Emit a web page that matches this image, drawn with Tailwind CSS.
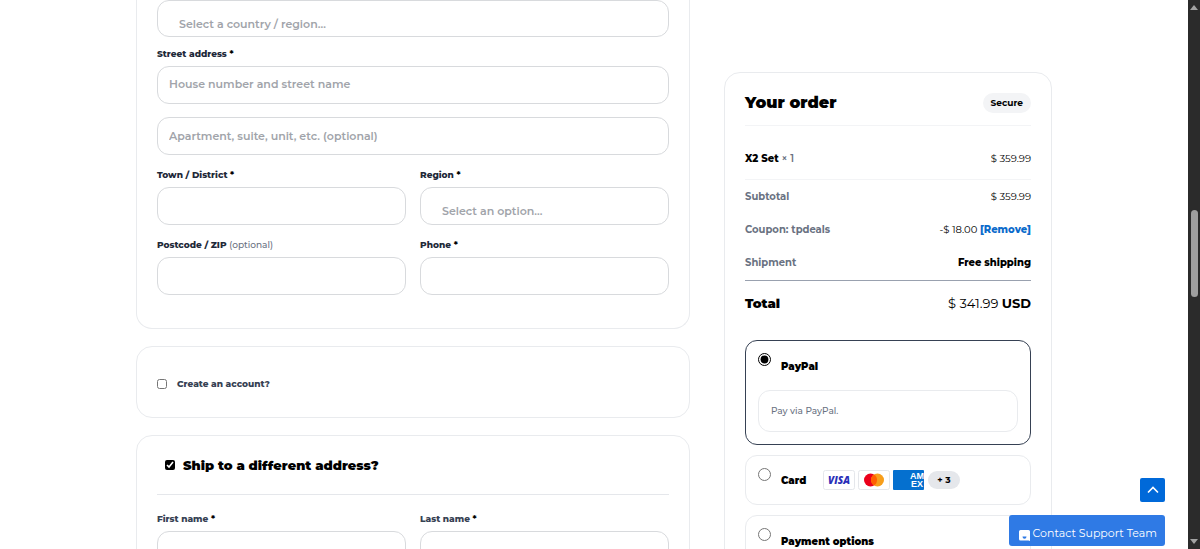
<!DOCTYPE html>
<html lang="en">
<head>
    <meta charset="UTF-8">
    <meta name="viewport" content="width=device-width, initial-scale=1.0">
    <title>Checkout</title>
    <script src="https://cdn.jsdelivr.net/npm/@tailwindcss/browser@4"></script>
</head>
<body class="flex h-screen overflow-hidden bg-white font-['Montserrat',Inter,sans-serif] text-black">
    <!-- Checkout -->
    <main class="min-w-0 flex-1 overflow-hidden">
        <form class="mx-auto grid max-w-[916px] grid-cols-[1fr_328px] items-start gap-[34px]">
            <div class="flex flex-col gap-[17px]">
                <!-- Billing details -->
                <section class="rounded-b-2xl border border-t-0 border-[#e9ebee] px-5 pb-[33px] text-[9px] leading-4 text-gray-800">
                    <select aria-label="Country / Region" class="block h-[37px] w-full appearance-none rounded-xl border border-[#d8dadd] pt-[10px] pl-[21px] text-[11px] font-semibold text-[#a1a4aa]">
                        <option>Select a country / region…</option>
                    </select>
                    <label for="street" class="mt-[9px] block font-extrabold">Street address <span class="text-black">*</span></label>
                    <input id="street" type="text" placeholder="House number and street name" class="mt-1 block h-[38px] w-full rounded-xl border border-[#d8dadd] px-[11px] pb-[2px] text-[11px] font-semibold placeholder:text-[#a1a4aa]">
                    <input type="text" aria-label="Apartment" placeholder="Apartment, suite, unit, etc. (optional)" class="mt-[13px] block h-[38px] w-full rounded-xl border border-[#d8dadd] px-[11px] text-[11px] font-semibold placeholder:text-[#a1a4aa]">
                    <div class="mt-3 grid grid-cols-2 gap-x-[14px] gap-y-3">
                        <div>
                            <label for="town" class="block font-extrabold">Town / District <span class="text-black">*</span></label>
                            <input id="town" type="text" class="mt-1 block h-[38px] w-full rounded-xl border border-[#d8dadd] px-[11px] text-[11px]">
                        </div>
                        <div>
                            <label for="region" class="block font-extrabold">Region <span class="text-black">*</span></label>
                            <select id="region" class="mt-1 block h-[38px] w-full appearance-none rounded-xl border border-[#d8dadd] pt-[10px] pl-[21px] text-[11px] font-semibold text-[#a1a4aa]">
                                <option>Select an option…</option>
                            </select>
                        </div>
                        <div>
                            <label for="postcode" class="block font-extrabold">Postcode / ZIP <span class="font-medium text-gray-500">(optional)</span></label>
                            <input id="postcode" type="text" class="mt-1 block h-[38px] w-full rounded-xl border border-[#d8dadd] px-[11px] text-[11px]">
                        </div>
                        <div>
                            <label for="phone" class="block font-extrabold">Phone <span class="text-black">*</span></label>
                            <input id="phone" type="tel" class="mt-1 block h-[38px] w-full rounded-xl border border-[#d8dadd] px-[11px] text-[11px]">
                        </div>
                    </div>
                </section>

                <!-- Account -->
                <section class="rounded-2xl border border-[#e9ebee] px-5 pt-[29px] pb-[25px]">
                    <label class="flex items-center gap-[10px] text-[9px] leading-4 font-extrabold text-gray-700">
                        <input type="checkbox" class="size-[10px]">
                        Create an account?
                    </label>
                </section>

                <!-- Shipping details -->
                <section class="rounded-2xl border border-[#e9ebee] px-5 pb-8 text-[9px] leading-4 text-gray-700">
                    <h3 class="border-b border-gray-200 px-2 pt-[19px] pb-[19px] text-black">
                        <label class="flex items-center gap-2 text-[13px] leading-5 font-black">
                            <input type="checkbox" checked class="size-[10px] accent-black">
                            Ship to a different address?
                        </label>
                    </h3>
                    <div class="mt-4 grid grid-cols-2 gap-x-[14px]">
                        <div>
                            <label for="first" class="block font-extrabold">First name <span class="text-black">*</span></label>
                            <input id="first" type="text" class="mt-1 block h-[38px] w-full rounded-xl border border-[#d8dadd] px-[11px] text-[11px]">
                        </div>
                        <div>
                            <label for="last" class="block font-extrabold">Last name <span class="text-black">*</span></label>
                            <input id="last" type="text" class="mt-1 block h-[38px] w-full rounded-xl border border-[#d8dadd] px-[11px] text-[11px]">
                        </div>
                    </div>
                </section>
            </div>

            <!-- Order summary -->
            <aside class="mt-[72px] rounded-2xl border border-[#e9ebee] px-5 pt-5 pb-8">
                <div class="flex items-center justify-between border-b border-gray-100 pb-3">
                    <h2 class="text-base leading-5 font-black">Your order</h2>
                    <span class="rounded-full bg-gray-100 px-2 text-[9px] leading-5 font-bold">Secure</span>
                </div>

                <table class="mt-3 w-full text-[10px]">
                    <tbody>
                        <tr class="h-[41px] border-b border-gray-100">
                            <td class="font-extrabold">X2 Set <span class="font-semibold text-gray-500">× 1</span></td>
                            <td class="text-right">$ 359.99</td>
                        </tr>
                        <tr class="h-[34px]">
                            <th scope="row" class="text-left font-bold text-gray-500">Subtotal</th>
                            <td class="text-right">$ 359.99</td>
                        </tr>
                        <tr class="h-[33px]">
                            <th scope="row" class="text-left font-bold text-gray-500">Coupon: tpdeals</th>
                            <td class="text-right">-$ 18.00 <a href="#" class="font-extrabold text-[#0b6bcb]">[Remove]</a></td>
                        </tr>
                        <tr class="h-[34px] border-b border-gray-400">
                            <th scope="row" class="text-left font-bold text-gray-500">Shipment</th>
                            <td class="text-right font-extrabold">Free shipping</td>
                        </tr>
                        <tr class="h-[46px] text-[13px]">
                            <th scope="row" class="text-left font-black">Total</th>
                            <td class="text-right">$ 341.99 <span class="font-bold">USD</span></td>
                        </tr>
                    </tbody>
                </table>

                <!-- Payment methods -->
                <div class="mt-[14px] flex flex-col gap-[10px] text-[10px] font-black">
                    <div class="rounded-xl border border-gray-700 p-3">
                        <label class="flex h-6 items-start gap-[10px]">
                            <input type="radio" name="payment" checked class="size-[13px] accent-black">
                            <span class="flex h-[26px] items-center">PayPal</span>
                        </label>
                        <p class="mt-[13px] rounded-xl border border-[#e9ebee] px-3 py-3 text-[9px] leading-4 font-medium text-gray-500">Pay via PayPal.</p>
                    </div>
                    <div class="rounded-xl border border-[#e9ebee] p-3">
                        <label class="flex h-6 items-start gap-[10px]">
                            <input type="radio" name="payment" class="size-[13px]">
                            <span class="flex h-6 items-center">Card</span>
                            <span class="ml-[7px] flex h-6 items-center gap-[3px]">
                                <svg class="h-5 w-8" viewBox="0 0 32 20" role="img" aria-label="Visa">
                                    <rect x=".5" y=".5" width="31" height="19" rx="2" fill="#fff" stroke="#e5e7eb"/>
                                    <text x="16" y="14" text-anchor="middle" font-family="Open Sans" font-size="10" font-weight="800" font-style="italic" fill="#2a2fb8">VISA</text>
                                </svg>
                                <svg class="h-5 w-8" viewBox="0 0 32 20" role="img" aria-label="Mastercard">
                                    <rect x=".5" y=".5" width="31" height="19" rx="2" fill="#fff" stroke="#e5e7eb"/>
                                    <circle cx="12.5" cy="10" r="6.5" fill="#eb001b"/>
                                    <circle cx="19.5" cy="10" r="6.5" fill="#f79e1b"/>
                                    <path d="M16 4.500a6.500 6.500 0 0 1 0 11a6.500 6.500 0 0 1 0-11z" fill="#ff5f00"/>
                                </svg>
                                <svg class="h-5 w-[31px]" viewBox="0 0 31 20" role="img" aria-label="American Express">
                                    <rect width="31" height="20" rx="1" fill="#0570cf"/>
                                    <text x="17" y="9" font-family="Liberation Sans" font-size="9" font-weight="700" fill="#fff">AM</text>
                                    <text x="18" y="17" font-family="Liberation Sans" font-size="9" font-weight="700" fill="#fff">EX</text>
                                </svg>
                                <span class="ml-px rounded-full bg-gray-200 px-[9px] text-[9px] leading-[18px] font-bold">+ 3</span>
                            </span>
                        </label>
                    </div>
                    <div class="rounded-xl border border-[#e9ebee] p-3">
                        <label class="flex h-6 items-start gap-[10px]">
                            <input type="radio" name="payment" class="size-[13px]">
                            <span class="flex h-[26px] items-center">Payment options</span>
                        </label>
                    </div>
                </div>
            </aside>
        </form>
    </main>

    <!-- Floating buttons -->
    <div class="fixed right-[35px] bottom-[3px] flex flex-col items-end gap-[13px]">
        <button type="button" aria-label="Back to top" class="flex h-6 w-[25px] items-center justify-center rounded-xs bg-[#0069d9] text-white">
            <svg class="h-3 w-3" viewBox="0 0 12 12" fill="none" stroke="currentColor" stroke-width="1.6">
                <path d="M1 8.500l5-5 5 5"/>
            </svg>
        </button>
        <button type="button" class="flex h-[31px] items-center gap-[3px] rounded-[3px] bg-[#2f7ae5] px-2 pt-[6px] pl-[10px] text-[11px] text-white">
            <svg class="mt-1 h-[11px] w-[11px]" viewBox="0 0 11 11">
                <path d="M1.500 0h8Q11 0 11 1.500V11L9.500 10.500H1.500Q0 10.500 0 9V1.500Q0 0 1.500 0z" fill="#fff"/>
                <path d="M3.500 6.500h4q0 2.200-2 2.200t-2-2.200z" fill="#2f7ae5"/>
            </svg>
            Contact Support Team
        </button>
    </div>

    <!-- Scrollbar -->
    <div class="flex w-3 flex-col items-center justify-between bg-[#2b2b2b] py-[5px]" aria-hidden="true">
        <svg class="h-[5px] w-2" viewBox="0 0 8 5"><path d="M4 0l4 5H0z" fill="#a3a3a3"/></svg>
        <div class="mb-[42px] h-[87px] w-[7px] rounded-full bg-[#9f9f9f]"></div>
        <svg class="h-[5px] w-2" viewBox="0 0 8 5"><path d="M0 0h8L4 5z" fill="#a3a3a3"/></svg>
    </div>
</body>
</html>
